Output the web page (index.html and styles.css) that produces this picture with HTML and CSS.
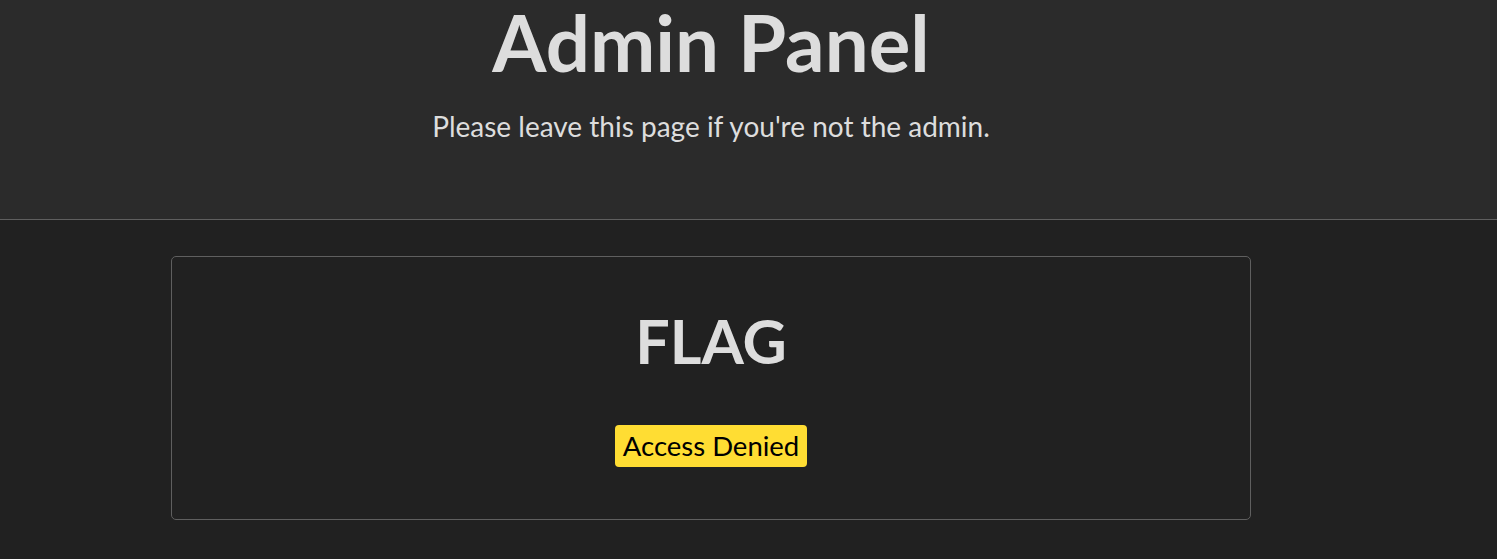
FILE: index.html
```html
<!DOCTYPE html>
<html lang="en">
<head>
<meta charset="utf-8">
<title>Admin Panel</title>
<link rel="stylesheet" href="styles.css">
</head>
<body>
<header class="header">
  <div class="inner header-inner">
    <h1 class="title">Admin Panel</h1>
    <p class="subtitle">Please leave this page if you're not the admin.</p>
  </div>
</header>
<main class="inner main">
  <section class="card">
    <h2 class="flag">FLAG</h2>
    <span class="badge">Access Denied</span>
  </section>
</main>
</body>
</html>
```

FILE: styles.css
```css
html, body {
  margin: 0;
  padding: 0;
  background: #212121;
  color: #dddddd;
  font-family: "Lato", "Open Sans", sans-serif;
}
.inner {
  width: 1422px;
}
.header {
  background: #2b2b2b;
  border-bottom: 1px solid #5f5f5f;
  box-sizing: border-box;
  height: 220px;
}
.header-inner {
  display: flex;
  flex-direction: column;
  align-items: center;
}
.title {
  margin: 0;
  font-size: 78px;
  font-weight: 700;
  line-height: 84px;
}
.subtitle {
  margin: 25px 0 0;
  font-size: 28px;
  line-height: 34px;
}
.main {
  padding-top: 36px;
}
.card {
  width: 1080px;
  margin: 0 auto;
  box-sizing: border-box;
  height: 264px;
  border: 1px solid #5f5f5f;
  border-radius: 5px;
  display: flex;
  flex-direction: column;
  align-items: center;
  padding-top: 46px;
}
.flag {
  margin: 0;
  font-size: 61px;
  font-weight: 700;
  line-height: 76px;
}
.badge {
  margin-top: 46px;
  background: #ffdd33;
  color: #000;
  font-size: 27.5px;
  line-height: 42px;
  padding: 0 8px;
  border-radius: 4px;
}
```
